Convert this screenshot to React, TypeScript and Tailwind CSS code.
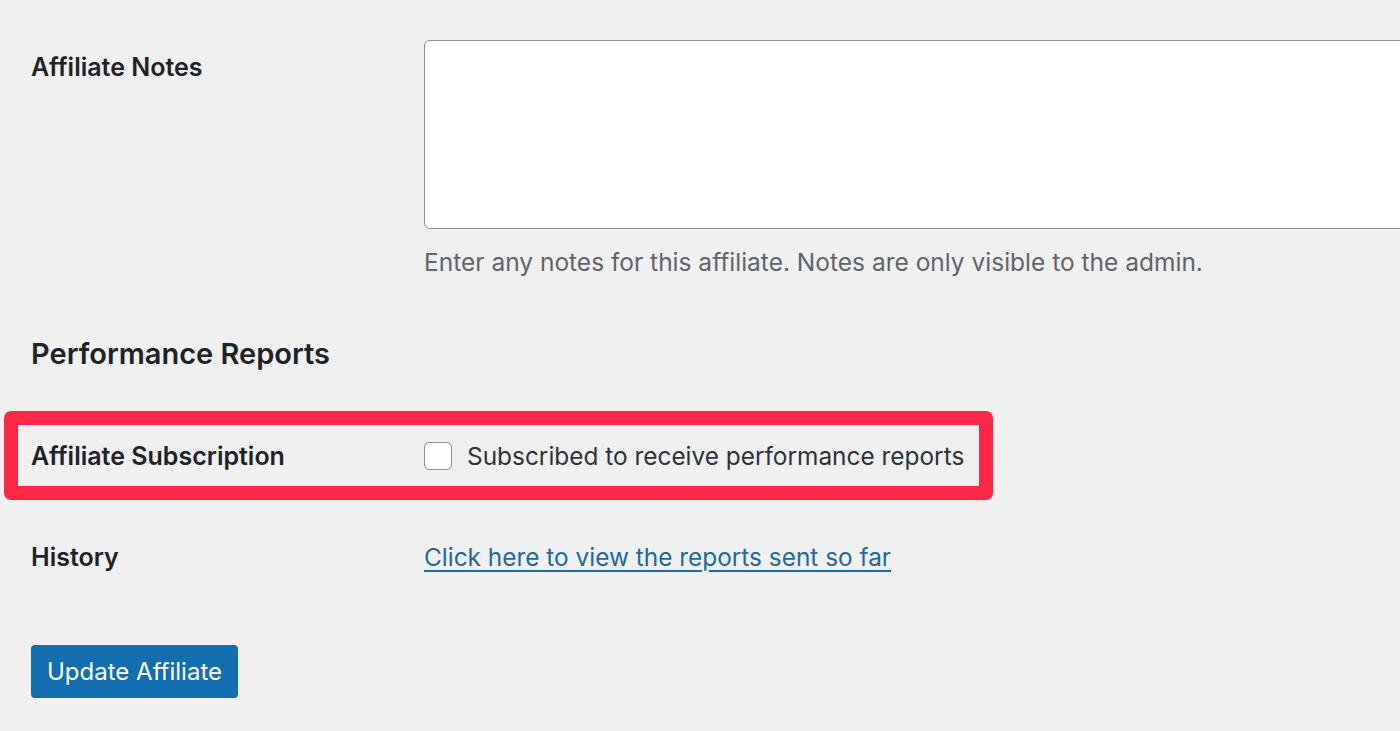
export default function App() {
  return (
    <div
      className="w-[1400px] h-[731px] overflow-hidden bg-[#f0f0f1] text-[#1d2327] pl-[31px] pt-[40px]"
      style={{ fontFamily: 'Inter, "Noto Sans", sans-serif' }}
    >
      {/* Affiliate notes */}
      <div className="flex">
        <div className="w-[393px] shrink-0 pt-[12px] text-[25px] leading-[30px] font-semibold">Affiliate Notes</div>
        <div className="shrink-0">
          <textarea className="block w-[1010px] h-[189px] bg-white border-[1.5px] border-[#8c8f94] rounded-[6px] resize-none outline-none" />
          <p className="mt-[18px] text-[24.5px] leading-[30px] text-[#5f6469]">
            Enter any notes for this affiliate. Notes are only visible to the admin.
          </p>
        </div>
      </div>

      {/* Section heading */}
      <h2 className="mt-[60px] text-[29px] leading-[34px] font-semibold">Performance Reports</h2>

      {/* Highlighted subscription row */}
      <div className="mt-[40px] -ml-[27px] w-[989px] border-[14px] border-[#fe2846] rounded-[7px] pl-[13px] h-[89px] flex items-center">
        <div className="w-[393px] shrink-0 text-[25px] leading-[30px] font-semibold">Affiliate Subscription</div>
        <label className="flex items-center gap-[15px] text-[24.4px] leading-[30px] text-[#2c3338]">
          <span className="w-[28px] h-[28px] bg-white border-[1.5px] border-[#8c8f94] rounded-[5px]" />
          Subscribed to receive performance reports
        </label>
      </div>

      {/* History */}
      <div className="mt-[42px] flex items-center">
        <div className="w-[393px] shrink-0 text-[25px] leading-[30px] font-semibold">History</div>
        <a href="#" className="text-[24.4px] leading-[30px] text-[#21699c] underline underline-offset-[4px]">
          Click here to view the reports sent so far
        </a>
      </div>

      <button className="mt-[73px] w-[207px] h-[53px] bg-[#126eae] text-white rounded-[4px] text-[24px] font-normal">
        Update Affiliate
      </button>
    </div>
  );
}
